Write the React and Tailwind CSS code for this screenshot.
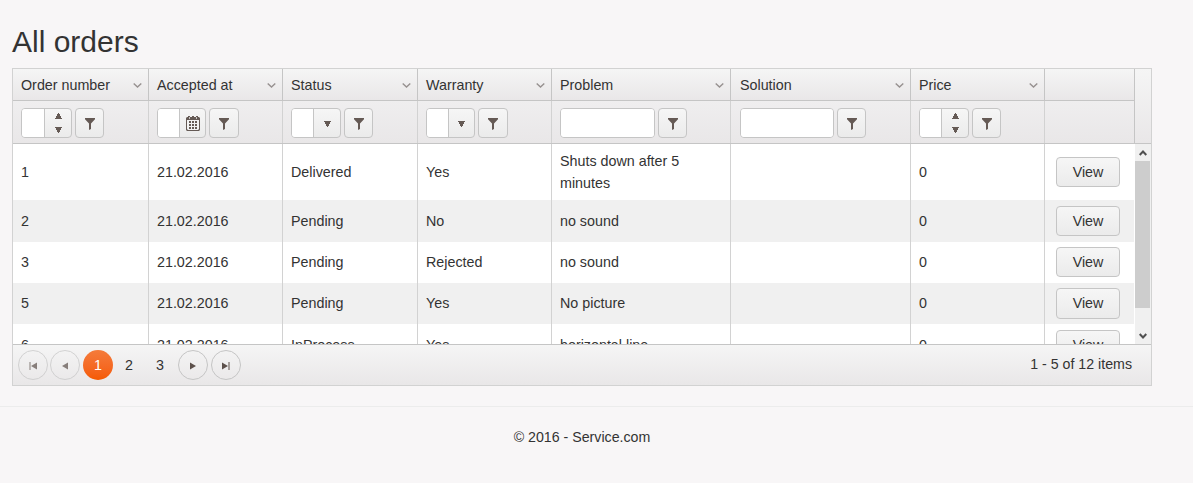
import React from "react";

const columns = [
  { key: "id", title: "Order number", width: "w-[135px]", border: "", pad: "pl-2", filter: "number", field: "w-[51px]", input: "w-[22px]", button: "w-[29px]" },
  { key: "date", title: "Accepted at", width: "w-[134px]", border: "border-l", pad: "pl-2", filter: "date", field: "w-[49px]", input: "w-[21px]", button: "w-[30px]" },
  { key: "status", title: "Status", width: "w-[135px]", border: "border-l", pad: "pl-2", filter: "select", field: "w-[50px]", input: "w-[21px]", button: "w-[29px]" },
  { key: "warranty", title: "Warranty", width: "w-[134px]", border: "border-l", pad: "pl-2", filter: "select", field: "w-[49px]", input: "w-[21px]", button: "w-[30px]" },
  { key: "problem", title: "Problem", width: "w-[179px]", border: "border-l", pad: "pl-2", filter: "text", field: "w-[95px]", input: "w-full", button: "w-[29px]" },
  { key: "solution", title: "Solution", width: "w-[180px]", border: "border-l", pad: "pl-[9px]", filter: "text", field: "w-[94px]", input: "w-full", button: "w-[29px]" },
  { key: "price", title: "Price", width: "w-[134px]", border: "border-l", pad: "pl-2", filter: "number", field: "w-[50px]", input: "w-[21px]", button: "w-[29px]" },
];

const orders = [
  { id: "1", date: "21.02.2016", status: "Delivered", warranty: "Yes", problem: "Shuts down after 5 minutes", solution: "", price: "0", row: "h-[56px] bg-white", button: "h-[30px]" },
  { id: "2", date: "21.02.2016", status: "Pending", warranty: "No", problem: "no sound", solution: "", price: "0", row: "h-[42px] bg-[#f0f0f0]", button: "h-[30px]" },
  { id: "3", date: "21.02.2016", status: "Pending", warranty: "Rejected", problem: "no sound", solution: "", price: "0", row: "h-[41px] bg-white pb-px", button: "h-[30px]" },
  { id: "5", date: "21.02.2016", status: "Pending", warranty: "Yes", problem: "No picture", solution: "", price: "0", row: "h-[41px] bg-[#f0f0f0] pb-px", button: "h-[31px]" },
  { id: "6", date: "21.02.2016", status: "InProcess", warranty: "Yes", problem: "horizontal line", solution: "", price: "0", row: "h-[42px] bg-white", button: "h-[30px]" },
];

const raised = "bg-linear-to-b from-[#f6f6f6] to-[#ebebeb]";

function Triangle({ direction }) {
  const shapes = {
    up: "M3 0h1v1h1v2h1v2h1v1H0V5h1V3h1V1h1z",
    down: "M0 0h7v1H6v2H5v2H4v1H3V5H2V3H1V1H0z",
  };
  return (
    <svg width="7" height="6" viewBox="0 0 7 6" fill="#655a55" className="block">
      <path d={shapes[direction]} />
    </svg>
  );
}

function Funnel() {
  return (
    <svg width="10" height="12" viewBox="0 0 10 12" fill="#655a55" className="block">
      <path d="M0 0h10v1.2L6 5.6V11L4 12V5.6L0 1.2z" />
    </svg>
  );
}

function Calendar() {
  return (
    <svg width="14" height="15" viewBox="0 0 14 15" className="block">
      <path d="M2 0h2v1h2V0h2v1h2V0h2v1h1l1 1v12l-1 1H1l-1-1V2l1-1h1z" fill="#655a55" />
      <path d="M1 4h12v9l-1 1H2l-1-1z" fill="#f2f2f2" />
      <path d="M6 5h2v2H6zM9 5h2v2H9zM3 8h2v2H3zM6 8h2v2H6zM9 8h2v2H9zM3 11h2v2H3zM6 11h2v2H6zM9 11h2v2H9zM3 5h2v2H3z" fill="#655a55" />
      <path d="M3 1h1v2H3zM10 1h1v2h-1z" fill="#c9c5c3" />
    </svg>
  );
}

function Chevron() {
  return (
    <svg width="9" height="5" viewBox="0 0 9 5" fill="none" stroke="#979190" strokeWidth="1.4" className="mt-px block">
      <path d="M0.7 0.5L4.5 4L8.3 0.5" />
    </svg>
  );
}

function FilterField({ column }) {
  return (
    <div className={`flex h-[30px] shrink-0 overflow-hidden rounded border border-[#c5c5c5] ${raised} ${column.field}`}>
      <div className={`h-full bg-white ${column.input}`} />
      {column.filter !== "text" && (
        <div className="flex h-full flex-1 items-center justify-center border-l border-[#c5c5c5]">
          {column.filter === "number" && (
            <div className="flex flex-col gap-2 pb-px">
              <Triangle direction="up" />
              <Triangle direction="down" />
            </div>
          )}
          {column.filter === "date" && <Calendar />}
          {column.filter === "select" && (
            <div className="pt-0.5">
              <Triangle direction="down" />
            </div>
          )}
        </div>
      )}
    </div>
  );
}

function PageButton({ className, children }) {
  return (
    <button className={`flex size-[30px] shrink-0 items-center justify-center rounded-full border border-[#c5c5c5] pt-0.5 ${className}`}>
      {children}
    </button>
  );
}

function PagerArrow({ back, bar }) {
  return (
    <svg width="8" height="8" viewBox="0 0 8 8" fill="#5c504b" className={back ? "block -scale-x-100" : "block"}>
      {bar ? <path d="M0 0.5L6 4L0 7.5zM6.5 0h1v8h-1z" /> : <path d="M1 0.5L7 4L1 7.5z" />}
    </svg>
  );
}

export default function App() {
  return (
    <div className="h-[483px] overflow-hidden bg-[#f8f6f7] font-['Liberation_Sans',Arial,sans-serif] text-[14.3px] leading-[22px] text-[#333]">
      <main className="px-3 pt-6">
        <h1 className="h-[44px] text-[30px] leading-[36px]">All orders</h1>

        <section className="h-[318px] w-[1140px] border border-[#d2d2d2] bg-white">
          <header className="flex h-[75px] border-b border-[#c5c5c5]">
            <div className="w-[1121px]">
              <div className="flex h-[32px] border-b border-[#c5c5c5] bg-linear-to-b from-[#f5f5f5] to-[#e9e7e8]">
                {columns.map((c) => (
                  <div key={c.key} className={`flex items-center justify-between border-[#c5c5c5] pt-px pr-1.5 whitespace-nowrap ${c.pad} ${c.width} ${c.border}`}>
                    <span>{c.title}</span>
                    <Chevron />
                  </div>
                ))}
                <div className="w-[90px] border-l border-[#c5c5c5]" />
              </div>
              <div className="flex h-[42px] bg-linear-to-b from-[#efeeef] to-[#e9e7e8]">
                {columns.map((c) => (
                  <div key={c.key} className={`flex gap-[3px] border-[#d2d2d2] pt-[7px] ${c.pad} ${c.width} ${c.border}`}>
                    <FilterField column={c} />
                    <button className={`flex h-[30px] items-center justify-center rounded border border-[#c5c5c5] pt-0.5 ${raised} ${c.button}`}>
                      <Funnel />
                    </button>
                  </div>
                ))}
                <div className="w-[90px] border-l border-[#d2d2d2]" />
              </div>
            </div>
            <div className="flex-1 border-l border-[#c5c5c5] bg-linear-to-b from-[#f5f5f5] to-[#e9e7e8]" />
          </header>

          <div className="flex h-[200px] overflow-hidden">
            <div className="w-[1121px]">
              {orders.map((order) => (
                <div key={order.id} className={`flex ${order.row}`}>
                  {columns.map((c) => (
                    <div key={c.key} className={`-mb-px flex items-center border-[#d2d2d2] pr-2 pb-px ${c.pad} ${c.width} ${c.border}`}>
                      {order[c.key]}
                    </div>
                  ))}
                  <div className="-mb-px flex w-[90px] items-center border-l border-[#d2d2d2] pb-px pl-[11px]">
                    <button className={`w-[64px] rounded border border-[#c5c5c5] ${raised} ${order.button}`}>View</button>
                  </div>
                </div>
              ))}
            </div>
            <div className="ml-px flex w-4 flex-col bg-[#f0f0f0]">
              <div className="flex h-[17px] items-center justify-center pt-px pr-px">
                <svg width="8" height="6" viewBox="0 0 8 6" fill="none" stroke="#505050" strokeWidth="2">
                  <path d="M0.7 5L4 1.5L7.3 5" />
                </svg>
              </div>
              <div className="h-[147px] w-[15px] bg-[#cdcdcd]" />
              <div className="mt-auto flex h-[17px] items-center justify-center pr-px">
                <svg width="8" height="6" viewBox="0 0 8 6" fill="none" stroke="#505050" strokeWidth="2">
                  <path d="M0.7 1L4 4.5L7.3 1" />
                </svg>
              </div>
            </div>
          </div>

          <footer className="flex h-[41px] items-center justify-between border-t border-[#c5c5c5] bg-linear-to-b from-[#f5f5f5] to-[#e9e7e8] pr-[19px] pl-[5px]">
            <div className="flex items-center">
              <PageButton className="opacity-70"><PagerArrow back bar /></PageButton>
              <PageButton className="ml-0.5 opacity-70"><PagerArrow back /></PageButton>
              <span className="ml-[3px] flex size-[30px] items-center justify-center rounded-full bg-linear-to-b from-[#f47b3a] to-[#f55a00] text-white">1</span>
              <span className="ml-px w-[30px] text-center">2</span>
              <span className="ml-px w-[30px] text-center">3</span>
              <PageButton className="ml-[3px]"><PagerArrow /></PageButton>
              <PageButton className="ml-[3px]"><PagerArrow bar /></PageButton>
            </div>
            <span className="pb-0.5 text-[14.2px]">1 - 5 of 12 items</span>
          </footer>
        </section>
      </main>
      <div className="mt-5 border-t border-[#ececec]" />
      <footer className="w-[1164px] pt-[19px] text-center text-[14.2px]">© 2016 - Service.com</footer>
    </div>
  );
}
